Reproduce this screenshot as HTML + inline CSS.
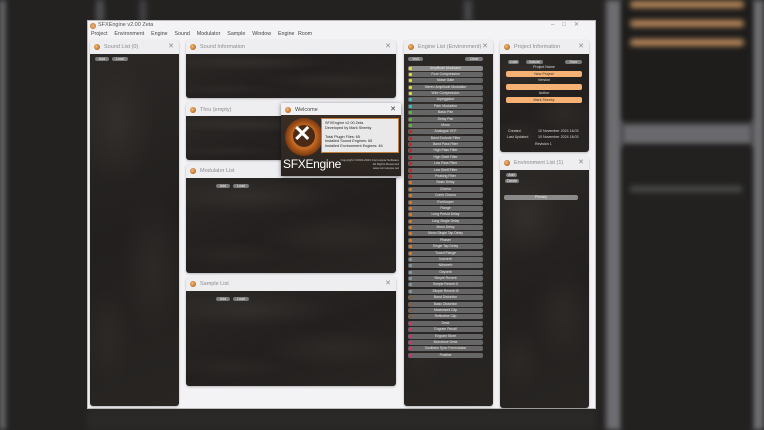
<!DOCTYPE html>
<html><head><meta charset="utf-8">
<style>
*{margin:0;padding:0;box-sizing:border-box}
body{width:764px;height:430px;overflow:hidden;background:#232221;font-family:"Liberation Sans",sans-serif;position:relative}
.a{position:absolute}
.bg{filter:blur(3px)}
.marble{background:
 radial-gradient(ellipse 60% 25% at 30% 20%,rgba(70,66,62,.35),transparent 70%),
 radial-gradient(ellipse 50% 30% at 70% 60%,rgba(66,62,58,.3),transparent 70%),
 radial-gradient(ellipse 40% 20% at 20% 80%,rgba(60,56,52,.3),transparent 70%),
 linear-gradient(160deg,#2b2826,#221f1e 50%,#282523);}
.panel{position:absolute;background:#eeeef1;border-radius:3px;box-shadow:0 1px 2px rgba(0,0,0,.25)}
.hd{position:absolute;left:0;right:0;top:0;height:14px;font-size:5.5px;color:#8a8a90;line-height:14px;padding-left:14px}
.hd .ic{position:absolute;left:4px;top:4px;width:6px;height:6px;border-radius:50%;background:radial-gradient(circle at 40% 40%,#f0c080,#c06a20 70%,#6b3a10)}
.hd .x{position:absolute;right:5px;top:0;font-size:7px;color:#888}
.bd{position:absolute;left:0;right:0;bottom:0;top:14px;border-radius:0 0 3px 3px}
.btn{position:absolute;height:4px;border-radius:2px;background:#7a7a7a;color:#eee;font-size:3.5px;line-height:4px;text-align:center}
.row{position:absolute;left:408px;width:75px;height:5px;border-radius:2px;background:#666;color:#e8e8e8;font-size:3.4px;line-height:5px;text-align:center}
.row i{position:absolute;left:1px;top:1px;width:3px;height:3px;border-radius:1px}
.lab{position:absolute;font-size:3.6px;color:#ddd;text-align:center}
.of{position:absolute;left:506px;width:76px;height:6px;border-radius:2px;background:#f5b274;color:#333;font-size:3.6px;line-height:6px;text-align:center}
</style></head><body>
<div class="a bg" style="left:0;top:0;width:5px;height:430px;background:#7a7a7e"></div>
<div class="a bg" style="left:96px;top:0;width:8px;height:22px;background:#505054"></div>
<div class="a bg" style="left:140px;top:0;width:6px;height:22px;background:#48484c"></div>
<div class="a bg" style="left:464px;top:0;width:8px;height:22px;background:#48484c"></div>
<div class="a bg" style="left:606px;top:0;width:16px;height:430px;background:#6e6e72"></div>
<div class="a bg" style="left:752px;top:0;width:12px;height:430px;background:#6e6e72"></div>
<div class="a bg" style="left:622px;top:0;width:130px;height:120px;background:#1e1d1c"></div>
<div class="a bg" style="left:630px;top:1px;width:114px;height:7px;background:#b8885a;border-radius:3px"></div>
<div class="a bg" style="left:630px;top:20px;width:114px;height:7px;background:#b8885a;border-radius:3px"></div>
<div class="a bg" style="left:630px;top:39px;width:114px;height:7px;background:#b8885a;border-radius:3px"></div>
<div class="a bg" style="left:622px;top:124px;width:130px;height:20px;background:#6a6a6e"></div>
<div class="a bg" style="left:622px;top:147px;width:130px;height:283px;background:#222120"></div>
<div class="a bg" style="left:630px;top:186px;width:112px;height:6px;background:#4a4a4a"></div>
<div class="a bg" style="left:87px;top:409px;width:509px;height:21px;background:#2a2928"></div>

<div class="a" style="left:87px;top:20px;width:509px;height:389px;background:#f3f3f5;border:1px solid #bbb">
 <div class="a" style="left:2px;top:2px;width:6px;height:6px;border-radius:50%;background:radial-gradient(circle,#f0c080,#b06020)"></div>
 <div class="a" style="left:10px;top:1px;font-size:5.5px;color:#555">SFXEngine v2.00 Zeta</div>
 <div class="a" style="right:8px;top:0;font-size:6px;color:#888;letter-spacing:8px">–□✕</div>
 <div class="a" style="left:3px;top:10px;font-size:5.3px;color:#444;word-spacing:2px">Project &nbsp;Environment &nbsp;Engine &nbsp;Sound &nbsp;Modulator &nbsp;Sample &nbsp;Window &nbsp;Engine Room</div>
</div>

<div class="panel" style="left:90px;top:40px;width:89px;height:366px">
 <div class="hd"><span class="ic"></span>Sound List (0)<span class="x">✕</span></div>
 <div class="bd marble"></div>
 <div class="btn" style="left:5px;top:17px;width:14px">Add</div>
 <div class="btn" style="left:22px;top:17px;width:16px">Load</div>
</div>
<div class="panel" style="left:186px;top:40px;width:210px;height:58px">
 <div class="hd"><span class="ic"></span>Sound Information<span class="x">✕</span></div>
 <div class="bd marble"></div>
</div>
<div class="panel" style="left:186px;top:102px;width:210px;height:58px">
 <div class="hd" style="top:1px"><span class="ic"></span>Thru (empty)</div>
 <div class="bd marble"></div>
</div>
<div class="panel" style="left:186px;top:164px;width:210px;height:109px">
 <div class="hd"><span class="ic"></span>Modulator List<span class="x">✕</span></div>
 <div class="bd marble"></div>
 <div class="btn" style="left:30px;top:20px;width:14px">Add</div>
 <div class="btn" style="left:47px;top:20px;width:16px">Load</div>
</div>
<div class="panel" style="left:186px;top:277px;width:210px;height:109px">
 <div class="hd"><span class="ic"></span>Sample List<span class="x">✕</span></div>
 <div class="bd marble"></div>
 <div class="btn" style="left:30px;top:20px;width:14px">Add</div>
 <div class="btn" style="left:47px;top:20px;width:16px">Load</div>
</div>
<div class="a" style="left:281px;top:103px;width:120px;height:73px;background:#f1f1f3;box-shadow:0 1px 4px rgba(0,0,0,.5)">
 <div class="hd" style="color:#444"><span class="ic"></span>Welcome<span class="x" style="color:#333">✕</span></div>
 <div class="a" style="left:0;top:12px;width:120px;height:61px;background:linear-gradient(180deg,#3a2e26,#2a2420)">
  <div class="a" style="left:4px;top:3px;width:38px;height:38px;border-radius:50%;background:radial-gradient(circle,#e7924a 0,#c0651f 45%,#7a3a12 70%,transparent 72%)"></div>
  <div class="a" style="left:12px;top:10px;width:22px;height:22px;border-radius:50%;background:#4a2a14"></div>
  <div class="a" style="left:12px;top:4px;font-size:22px;font-weight:bold;color:#fff;line-height:30px">✕</div>
  <div class="a" style="left:40px;top:3px;width:78px;height:35px;background:#e9e9ea;border:1px solid #c08040;font-size:3.8px;color:#222;padding:2px 3px;line-height:4.6px">SFXEngine v2.00 Zeta<br>Developed by Mark Sheeky<br><br>Total Plugin Files: 65<br>Installed Sound Engines: 65<br>Installed Environment Engines: 46</div>
  <div class="a" style="left:2px;top:42px;font-size:12px;color:#fff;letter-spacing:-.3px">SFXEngine</div>
  <div class="a" style="right:2px;top:43px;font-size:3px;color:#ccc;text-align:right;line-height:4px">Copyright ©2004-2024 Cornutopia Software<br>All Rights Reserved<br>www.cornutopia.net</div>
 </div>
</div>
<div class="panel" style="left:404px;top:40px;width:89px;height:366px">
 <div class="hd"><span class="ic"></span>Engine List (Environment)<span class="x">✕</span></div>
 <div class="bd marble"></div>
 <div class="btn" style="left:4px;top:17px;width:15px">Visit</div>
 <div class="btn" style="left:61px;top:17px;width:18px">Clear</div>
</div>
<div id="rows"></div>
<div class="panel" style="left:500px;top:40px;width:89px;height:112px">
 <div class="hd"><span class="ic"></span>Project Information<span class="x">✕</span></div>
 <div class="bd marble"></div>
</div>
<div class="btn" style="left:508px;top:60px;width:11px">Load</div>
<div class="btn" style="left:526px;top:60px;width:17px">Include</div>
<div class="btn" style="left:565px;top:60px;width:17px">Save</div>
<div class="lab" style="left:506px;width:76px;top:65px">Project Name</div>
<div class="of" style="top:71px">New Project</div>
<div class="lab" style="left:506px;width:76px;top:78px">Version</div>
<div class="of" style="top:84px"></div>
<div class="lab" style="left:506px;width:76px;top:91px">Author</div>
<div class="of" style="top:97px">Mark Sheeky</div>
<div class="lab" style="left:508px;top:129px;text-align:left">Created</div>
<div class="lab" style="left:538px;top:129px;text-align:left">10 November 2024 16:03</div>
<div class="lab" style="left:507px;top:135px;text-align:left">Last Updated</div>
<div class="lab" style="left:538px;top:135px;text-align:left">10 November 2024 16:03</div>
<div class="lab" style="left:535px;top:142px;text-align:left">Revision 1</div>
<div class="panel" style="left:500px;top:156px;width:89px;height:252px">
 <div class="hd"><span class="ic"></span>Environment List (1)<span class="x">✕</span></div>
 <div class="bd marble"></div>
 <div class="btn" style="left:6px;top:17px;width:11px">Add</div>
 <div class="btn" style="left:5px;top:23px;width:14px">Delete</div>
 <div class="btn" style="left:4px;top:39px;width:74px;height:5px;background:#8a8a8a">Primary</div>
</div>
<script>
var n=["Amplitude Modulator","Fuzz Compression","Noise Gate","Stereo Amplitude Modulator","Wire Compression","Arpeggiator","Pitch Modulator","Basic Pan","Delay Pan","Mono","Analogue VCF","Band Exclude Filter","Band Pass Filter","High Pass Filter","High Shelf Filter","Low Pass Filter","Low Shelf Filter","Peaking Filter","Basic Delay","Chorus","Comb Chorus","Everlooper","Flange","Long Period Delay","Long Single Delay","Mono Delay","Mono Single Tap Delay","Phaser","Single Tap Delay","Tuned Flange","Ironverb","Nitroverb","Oxyverb","Simple Reverb","Simple Reverb II","Simple Reverb III","Band Distortion","Basic Distortion","Maximized Clip","Reflective Clip","Desk","Engram Recall","Engram Store","Monotone Desk","Oscillator Sync Formulation","Positive"];
var c=[[5,"#e8e020"],[2,"#20c8d0"],[3,"#50c030"],[8,"#d02020"],[12,"#e07818"],[6,"#8098a8"],[4,"#8a5a30"],[6,"#e02878"]];
var cols=[];c.forEach(function(p){for(var i=0;i<p[0];i++)cols.push(p[1])});
var h="";n.forEach(function(t,i){h+='<div class="row" style="top:'+(65.5+i*6.38).toFixed(1)+'px'+(i==0?';background:#8a8a8a':'')+'"><i style="background:'+cols[i]+'"></i>'+t+'</div>'});
document.getElementById("rows").innerHTML=h;
</script>
</body></html>
